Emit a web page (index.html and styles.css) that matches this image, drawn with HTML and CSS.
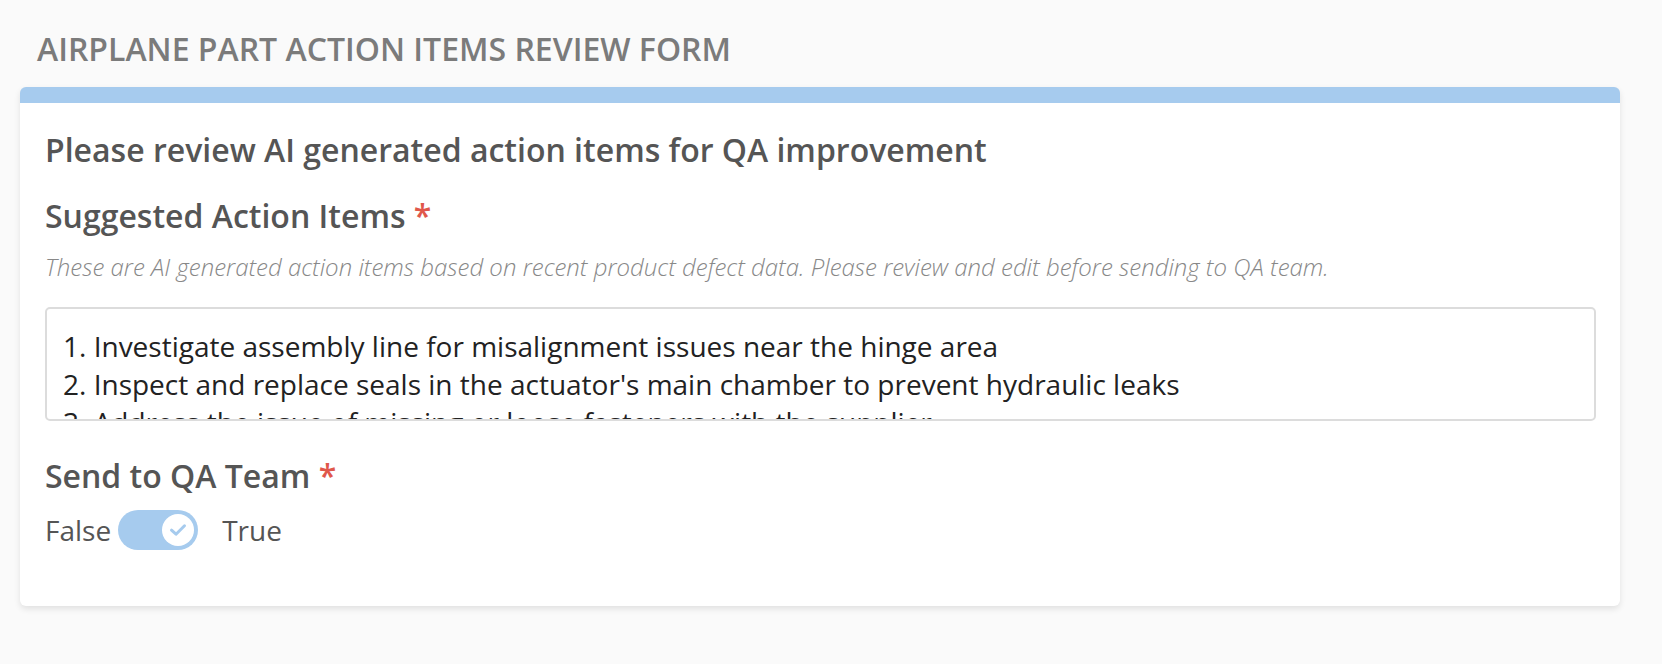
FILE: index.html
```html
<!DOCTYPE html>
<html lang="en">
<head>
<meta charset="utf-8">
<title>Airplane Part Action Items Review Form</title>
<link rel="stylesheet" href="styles.css">
</head>
<body>
<main class="page">
  <h1 class="page-title">AIRPLANE PART ACTION ITEMS REVIEW FORM</h1>
  <section class="card">
    <div class="card-body">
      <h2 class="card-heading">Please review AI generated action items for QA improvement</h2>
      <div class="field">
        <label class="field-label" for="items">Suggested Action Items <span class="req">*</span></label>
        <p class="field-desc">These are AI generated action items based on recent product defect data. Please review and edit before sending to QA team.</p>
        <textarea id="items" class="field-input" rows="3">1. Investigate assembly line for misalignment issues near the hinge area
2. Inspect and replace seals in the actuator's main chamber to prevent hydraulic leaks
3. Address the issue of missing or loose fasteners with the supplier
4. Review torque specifications for bolts used in the wing flap assembly</textarea>
      </div>
      <div class="field field-toggle">
        <div class="field-label">Send to QA Team <span class="req">*</span></div>
        <div class="toggle-row">
          <span class="toggle-text">False</span>
          <span class="toggle" role="switch" aria-checked="true">
            <span class="toggle-knob">
              <svg width="18" height="14" viewBox="0 0 18 14" aria-hidden="true"><path d="M2.5 7.2 L7 11.2 L15.5 2.8" fill="none" stroke="#a6cbee" stroke-width="3" stroke-linecap="round" stroke-linejoin="round"/></svg>
            </span>
          </span>
          <span class="toggle-text toggle-true">True</span>
        </div>
      </div>
    </div>
  </section>
</main>
</body>
</html>
```

FILE: styles.css
```css
* { box-sizing: border-box; }

html, body {
  margin: 0;
  padding: 0;
  background: #fafafa;
  font-family: "Open Sans", "Liberation Sans", sans-serif;
}

.page {
  padding: 30px 42px 40px 20px;
}

.page-title {
  margin: 0 0 19px 17px;
  font-size: 32px;
  line-height: 38px;
  font-weight: 600;
  color: #7b7b7b;
  letter-spacing: 0;
}

.card {
  background: #fff;
  border-top: 16px solid #a6cbee;
  border-radius: 6px;
  box-shadow: 0 3px 6px rgba(0, 0, 0, 0.10);
}

.card-body {
  padding: 27px 24px 56px 25px;
}

.card-heading {
  margin: 0 0 26px;
  font-size: 32px;
  line-height: 40px;
  font-weight: 600;
  color: #555;
}

.field-label {
  display: block;
  font-size: 32px;
  line-height: 40px;
  font-weight: 600;
  color: #555;
}

.req {
  color: #e0574b;
}

.field-desc {
  margin: 15px 0 24px;
  font-size: 24px;
  line-height: 32px;
  font-weight: 300;
  font-style: italic;
  color: #888;
}

.field-input {
  display: block;
  width: 100%;
  height: 114px;
  margin: 0;
  padding: 18px 16px 10px;
  border: 2px solid #dcdcdc;
  border-radius: 5px;
  font-family: "Open Sans", "Liberation Sans", sans-serif;
  font-size: 28px;
  line-height: 38px;
  color: #222;
  background: #fff;
  resize: none;
  overflow: hidden;
  outline: none;
}

.field-toggle {
  margin-top: 35px;
}

.toggle-row {
  display: flex;
  align-items: center;
  margin-top: 14px;
}

.toggle-text {
  font-size: 28px;
  line-height: 40px;
  color: #555;
}

.toggle {
  display: flex;
  align-items: center;
  justify-content: flex-end;
  width: 80px;
  height: 40px;
  margin-left: 7px;
  padding: 4px;
  border-radius: 20px;
  background: #a6cbee;
}

.toggle-knob {
  display: flex;
  align-items: center;
  justify-content: center;
  width: 32px;
  height: 32px;
  border-radius: 50%;
  background: #fff;
}

.toggle-true {
  margin-left: 24px;
}
```
